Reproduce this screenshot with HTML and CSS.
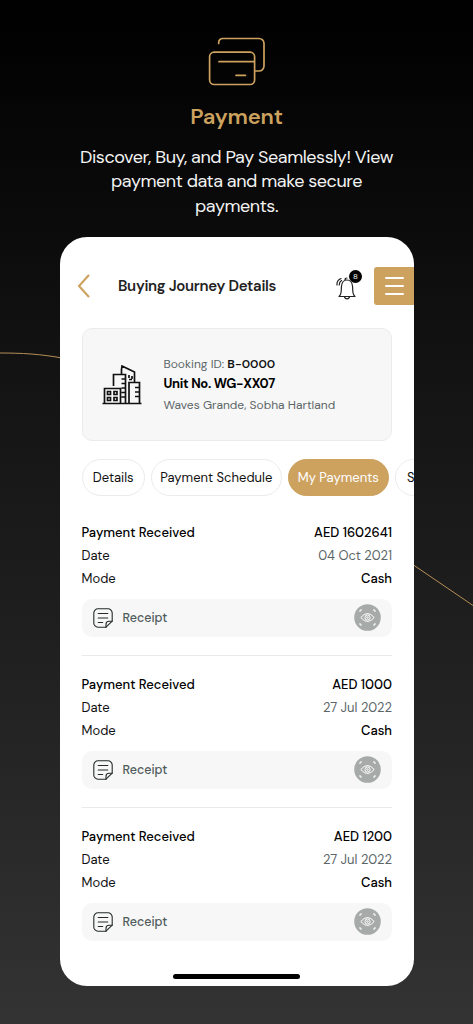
FILE: index.html
```html
<!DOCTYPE html>
<html lang="en">
<head>
<meta charset="utf-8">
<title>Payment</title>
<link rel="stylesheet" href="styles.css">
</head>
<body>
<svg class="defs" width="0" height="0" aria-hidden="true">
  <symbol id="note" viewBox="0 0 20 20"><g fill="none" stroke="#252b2b" stroke-width="1.1" stroke-linecap="round" stroke-linejoin="round"><path d="M13 19.2H5a4.2 4.2 0 0 1-4.2-4.2V5A4.2 4.2 0 0 1 5 .8h10A4.2 4.2 0 0 1 19.200 5v8.200z"/><path d="M13 19.200v-3a3 3 0 0 1 3-3h3.200M5.200 5.500h9.600M5.200 10h9.600M5.200 14.500h4.500"/></g></symbol>
  <symbol id="eye" viewBox="0 0 27 27"><circle cx="13.500" cy="13.500" r="13.300" fill="#a6abaa"/><g fill="none" stroke="#fff" stroke-width="1"><path d="M6 8V6h2M19 6h2v2M21 19v2h-2M8 21H6v-2"/><path d="M6.800 13.500q6.700-8 13.400 0q-6.700 8-13.400 0z"/><circle cx="13.500" cy="13.500" r="2.600"/><circle cx="13.500" cy="13.500" r=".8"/></g></symbol>
</svg>
<svg class="curves" viewBox="0 0 473 1024" aria-hidden="true"><path d="M0 353C22 353 40 354 62 358M412 564L473 605.500" fill="none" stroke="#b58f58" stroke-width="1"/></svg>
<header class="hero">
  <svg class="cards" viewBox="0 0 58 50" fill="none" stroke="#cda25f" stroke-width="1.700" stroke-linecap="round"><path d="M10.700 6.500V5.500a4 4 0 0 1 4-4H51a5 5 0 0 1 5 5V29a5 5 0 0 1-5 5h-4"/><rect x="1.600" y="15.200" width="45" height="32.300" rx="4.500"/><path d="M11 24.700h35M28 38.300h9.500"/></svg>
  <h1>Payment</h1>
  <p><span class="l1">Discover, Buy, and Pay Seamlessly! View</span><br><span class="l2">payment data and make secure</span><br><span class="l3">payments.</span></p>
</header>
<main class="phone">
  <div class="bar">
    <svg class="back" viewBox="0 0 14 24"><path d="M11.500 1.500L2 12l9.500 10.500" fill="none" stroke="#cda25f" stroke-width="2.100" stroke-linecap="round"/></svg>
    <h2><span>Buying Journey Details</span></h2>
    <div class="bell">
      <svg viewBox="0 0 26 28" fill="none" stroke="#222" stroke-width="1.200" stroke-linecap="round" stroke-linejoin="round"><path d="M3 24.500h16c-3-2.500-2-6-2.500-10.500-.400-3.500-2.500-6-5.500-6s-5.100 2.500-5.500 6C5 18.500 6 22 3 24.500zM8.500 25a2.600 2.600 0 0 0 5 0M9 8q0-2 2-2M1 13q-.500-4.500 4-6.500M3.200 13q0-3 2.300-4.500"/></svg>
      <span class="badge">8</span>
    </div>
    <div class="menu"><i></i><i></i><i></i></div>
  </div>
  <section class="booking">
    <svg class="building" viewBox="0 0 40 40" fill="none" stroke="#111" stroke-width="1.700"><path d="M.500 38.500h39M2.500 38V23.500h16V38M11.500 21V9.500h8V4.500L20 1l12.500 6v10M19.500 9.500h4V38M27 38V17.500h10.500V38M19.500 14h4M19.500 18.500h4M19.500 23h4M19.500 27.500h4M19.500 32h4M33 22.500h4M33 27h4M33 31.500h4M27 10v3M30 11v3M27 14.500h3"/><path d="M5.500 26.500h3v3h-3zM12 26.500h3v3h-3zM5.500 32.500h3v3h-3zM12 32.500h3v3h-3z"/></svg>
    <div class="info"><p class="bid"><span>Booking ID: </span><b>B-0000</b></p><p class="unit"><span>Unit No. WG-XX07</span></p><p class="place"><span>Waves Grande, Sobha Hartland</span></p></div>
  </section>
  <nav class="tabs"><span class="tab t1">Details</span><span class="tab t2">Payment Schedule</span><span class="tab t3 active">My Payments</span><span class="tab t4">Statement</span></nav>
  <section class="payment">
    <div class="row strong"><span>Payment Received</span><span class="amount">AED 1602641</span></div>
    <div class="row"><span>Date</span><span class="date">04 Oct 2021</span></div>
    <div class="row"><span>Mode</span><span class="cash">Cash</span></div>
    <div class="receipt"><svg class="note"><use href="#note"/></svg><span>Receipt</span><svg class="eye"><use href="#eye"/></svg></div>
  </section>
  <section class="payment">
    <div class="row strong"><span>Payment Received</span><span class="amount">AED 1000</span></div>
    <div class="row"><span>Date</span><span class="date">27 Jul 2022</span></div>
    <div class="row"><span>Mode</span><span class="cash">Cash</span></div>
    <div class="receipt"><svg class="note"><use href="#note"/></svg><span>Receipt</span><svg class="eye"><use href="#eye"/></svg></div>
  </section>
  <section class="payment">
    <div class="row strong"><span>Payment Received</span><span class="amount">AED 1200</span></div>
    <div class="row"><span>Date</span><span class="date">27 Jul 2022</span></div>
    <div class="row"><span>Mode</span><span class="cash">Cash</span></div>
    <div class="receipt"><svg class="note"><use href="#note"/></svg><span>Receipt</span><svg class="eye"><use href="#eye"/></svg></div>
  </section>
  <div class="home"></div>
</main>
</body>
</html>
```
FILE: styles.css
```css
* { box-sizing: border-box; }
html { height: 100%; background: #000; }
body { margin: 0; height: 1024px; overflow: hidden; background: linear-gradient(#000 0%, #090909 18%, #151515 40%, #1f1f1f 62%, #333 100%); font-family: "DM Sans", Inter, "Liberation Sans", sans-serif; color: #111; position: relative; }
h1, h2, p { margin: 0; }
svg { display: block; flex: none; }
.defs { position: absolute; }
.curves { position: absolute; left: 0; top: 0; width: 473px; height: 1024px; }
.hero { position: relative; height: 236.500px; padding-top: 37px; display: flex; flex-direction: column; align-items: center; text-align: center; }
.cards { width: 58px; height: 50px; }
h1 { font-size: 22px; line-height: 28px; margin-top: 16px; font-weight: 600; color: #cda25f; letter-spacing: -0.200px; }
.hero p { margin-top: 14px; font-size: 18px; line-height: 24.400px; color: #f3f3f3; white-space: nowrap; letter-spacing: -0.450px; }
.phone { position: relative; width: 354px; height: 749.500px; margin-left: 60px; background: #fff; border-radius: 27px; overflow: hidden; display: flex; flex-direction: column; padding: 30.500px 0 0 21.500px; }
.bar { height: 38px; display: flex; align-items: center; flex: none; }
.back { width: 14px; height: 24px; margin-left: -5px; }
h2 { font-size: 15px; line-height: 20px; font-weight: 600; margin-left: 27.500px; width: 217px; white-space: nowrap; letter-spacing: -0.300px; color: #222; }
.bell { position: relative; width: 26px; height: 28px; margin-left: 1px; }
.bell svg { width: 26px; height: 28px; }
.badge { position: absolute; left: 13px; top: -2px; width: 13px; height: 13px; border-radius: 50%; background: #000; color: #fff; font-size: 8px; line-height: 13px; text-align: center; }
.menu { width: 40px; height: 38px; margin-left: auto; border-radius: 3px 0 0 3px; background: #cda25f; display: flex; flex-direction: column; gap: 5.600px; align-items: center; justify-content: center; }
.menu i { width: 19px; height: 2px; border-radius: 1px; background: #fff; }
.booking { width: 310.500px; height: 113px; margin-top: 23px; flex: none; border: 1px solid #ebebeb; border-radius: 10px; background: #f7f7f7; display: flex; align-items: center; padding-left: 19px; }
.building { width: 40px; height: 40px; }
.info { margin-left: 22px; font-size: 12px; color: #5c6668; white-space: nowrap; }
.info p { line-height: 20.300px; }
.info b { color: #111; font-weight: 600; }
.info .unit { color: #000; font-size: 13px; font-weight: 700; letter-spacing: -0.300px; }
.tabs { display: flex; gap: 6px; margin-top: 18px; flex: none; }
.tab { height: 37px; border: 1px solid #ebebeb; border-radius: 19px; line-height: 35px; font-size: 13px; text-align: center; flex: none; white-space: nowrap; }
.t1 { width: 63.500px; }
.t2 { width: 130.500px; }
.t3 { width: 101.500px; }
.t4 { width: 90px; padding-left: 11px; text-align: left; }
.active { background: #cda25f; border-color: #cda25f; color: #fff; }
.payment { width: 310.500px; flex: none; padding-bottom: 18.500px; border-bottom: 1px solid #e9e9e9; margin-bottom: 16.500px; }
.tabs + .payment { margin-top: 25px; }
.payment:nth-last-of-type(1) { border: 0; }
.row { display: flex; justify-content: space-between; height: 23.200px; line-height: 23.200px; font-size: 13px; }
.strong, .cash { font-weight: 500; color: #000; }
.date { color: #5c6668; }
.receipt { height: 38px; margin-top: 8.400px; border-radius: 10px; background: #f7f7f7; display: flex; align-items: center; padding: 0 11.500px; font-size: 12.500px; font-weight: 500; color: #4f5b5b; }
.note { width: 20px; height: 20px; margin-right: 9.500px; }
.eye { width: 27px; height: 27px; margin-left: auto; }
.home { position: absolute; left: 113px; top: 737.500px; width: 127px; height: 5px; border-radius: 3px; background: #000; }
```
